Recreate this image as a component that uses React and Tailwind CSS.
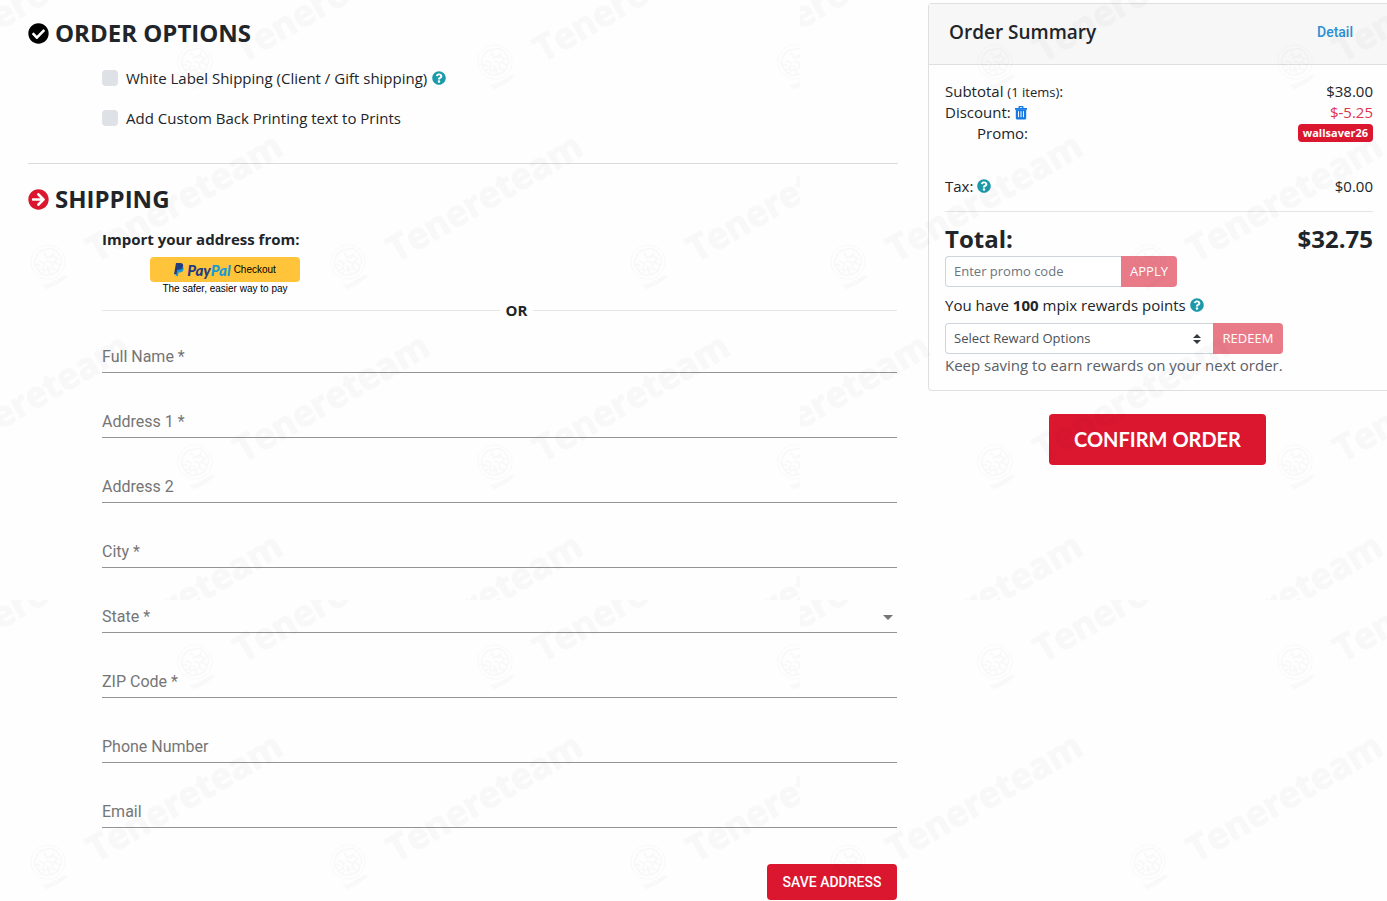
import { useState } from 'react';
import { FaArrowCircleRight, FaCheckCircle, FaQuestionCircle } from 'react-icons/fa';

const addressFields = [
  { id: 'fullName', label: 'Full Name *', type: 'text' },
  { id: 'address1', label: 'Address 1 *', type: 'text' },
  { id: 'address2', label: 'Address 2', type: 'text' },
  { id: 'city', label: 'City *', type: 'text' },
  { id: 'state', label: 'State *', type: 'select' },
  { id: 'zip', label: 'ZIP Code *', type: 'text' },
  { id: 'phone', label: 'Phone Number', type: 'tel' },
  { id: 'email', label: 'Email', type: 'email' },
];

// Stamp positions inside one 800x600 watermark tile
const stamps = [
  [-103, 65], [197, 65], [497, 65], [797, 65],
  [50, 265], [350, 265], [650, 265],
  [-103, 465], [197, 465], [497, 465], [797, 465],
  [50, 665], [350, 665], [650, 665],
];

const Watermark = () => (
  <svg className="absolute inset-0 w-full h-full pointer-events-none" aria-hidden="true">
    <defs>
      <pattern id="watermark" width="800" height="600" patternUnits="userSpaceOnUse">
        {stamps.map(([x, y]) => (
          <g key={`${x}-${y}`} transform={`translate(${x} ${y})`} opacity="0.024">
            <g fill="none" stroke="#000" strokeLinecap="round">
              <circle cx="-2" cy="-3" r="17" strokeDasharray="3 1" />
              <path
                d="M-14 -8q3 -8 9 -7q8 -4 13 3q6 7 2 13q-2 8 -9 8q-9 4 -13 -4q-6 -6 -2 -13M-11 -4l5 2l-1 6l-5 1M-6 -12l3 5l6 -3l4 4M-3 -4l6 2l-1 5l5 2M-8 8l5 -4l4 6M4 -12l-3 5M-14 -1l4 2M8 -6l-4 3l6 3M0 5l-3 -4"
                strokeWidth="1.5"
              />
              <path d="M-6 21l7 -2l7 -4l8 -5M-3 23l9 -4l7 -5l5 -4" strokeWidth="2" strokeDasharray="3 2" />
            </g>
            <text
              transform="translate(46 -2) rotate(-30)"
              fontFamily="Open Sans, sans-serif"
              fontWeight="700"
              fontSize="36"
              stroke="#000"
              strokeWidth="1"
            >
              Tenereteam
            </text>
          </g>
        ))}
      </pattern>
    </defs>
    <rect width="100%" height="100%" fill="url(#watermark)" />
  </svg>
);

const HelpButton = ({ label }) => (
  <button type="button" aria-label={label} className="text-[#1d9aaa]">
    <FaQuestionCircle size={14} />
  </button>
);

const SectionTitle = ({ icon, children }) => (
  <h2 className="flex items-center gap-1.5 text-2xl leading-9 font-bold text-[#212529]">
    {icon}
    {children}
  </h2>
);

const CheckOption = ({ id, label, help }) => (
  <div className="flex items-center h-6">
    <input
      id={id}
      type="checkbox"
      className="appearance-none size-4 rounded bg-[#dee2e6] checked:bg-[#db162f] mr-2"
    />
    <label htmlFor={id} className="mr-[5px]">{label}</label>
    {help && <HelpButton label={help} />}
  </div>
);

const Field = ({ id, label, type }) => {
  const [value, setValue] = useState('');
  const control = '[grid-area:1/1] w-full h-8 bg-transparent appearance-none outline-none border-b border-[#949494] text-[#212529]';

  return (
    <div className="grid items-center font-['Roboto',sans-serif] text-base">
      {type === 'select' ? (
        <select id={id} className={control} value={value} onChange={(e) => setValue(e.target.value)}>
          <option value=""></option>
          <option>California</option>
          <option>Kansas</option>
          <option>New York</option>
        </select>
      ) : (
        <input id={id} type={type} className={control} value={value} onChange={(e) => setValue(e.target.value)} />
      )}
      {!value && (
        <label htmlFor={id} className="[grid-area:1/1] justify-self-start text-[#757575] pointer-events-none">
          {label}
        </label>
      )}
      {type === 'select' && (
        <svg className="[grid-area:1/1] justify-self-end mr-1 pointer-events-none" width="10" height="5" viewBox="0 0 10 5">
          <path d="M0 0h10l-5 5z" fill="#757575" />
        </svg>
      )}
    </div>
  );
};

const PayPalButton = () => (
  <div className="w-[150px] ml-12 mt-1.5 font-['Liberation_Sans',Arial,sans-serif] text-black text-center">
    <button type="button" className="flex w-full h-[25px] items-center justify-center gap-[3px] rounded bg-[#ffc439]">
      <svg width="10" height="13" viewBox="0 0 10 13">
        <path d="M3.5 3.2h4.3c1.6 .5 2.2 1.7 1.7 3.4c-.5 2.2-1.9 3-4 3h-1l-.6 3.4H1.6z" fill="#179bd7" />
        <path d="M2 0h4.200c2.300 0 3.300 1.200 2.900 3.200c-.5 2.400-2 3.500-4.300 3.500H3.300l-.8 4.500H0z" fill="#253b80" />
      </svg>
      <span className="font-['Lato',sans-serif] text-[15px] leading-4 font-black italic text-[#253b80]">
        Pay<span className="text-[#179bd7]">Pal</span>
      </span>
      <span className="text-[10px]">Checkout</span>
    </button>
    <p className="text-[10px] leading-[14px]">The safer, easier way to pay</p>
  </div>
);

const OrderSummary = () => (
  <aside className="pt-[3px]">
    <div className="border border-r-0 border-[#dfdfdf] rounded-l">
      <div className="flex items-center justify-between h-[61px] pl-5 pr-[34px] pb-1 bg-[#f7f7f7] border-b border-[#dfdfdf]">
        <h3 className="text-[19px] font-semibold">Order Summary</h3>
        <a href="#detail" className="font-['Roboto',sans-serif] text-sm font-medium text-[#2a8fd5]">Detail</a>
      </div>
      <div className="pl-4 pr-3.5 pt-4 pb-3.5">
        <div className="flex items-center justify-between h-[21px]">
          <span>Subtotal <small className="text-[13px]">(1 items)</small>:</span>
          <span>$38.00</span>
        </div>
        <div className="flex items-center justify-between h-[21px]">
          <span className="flex items-center gap-1">
            Discount:
            <button type="button" aria-label="Remove discount" className="text-[#1579e6]">
              <svg width="12" height="14" viewBox="0 0 12 14">
                <path
                  d="M3.500 2V.8q0 -.8 .8 -.8h3.400q.8 0 .8 .8V2H12v1.800H0V2zM4.800 2h2.400V1.200H4.800z"
                  fill="currentColor"
                  fillRule="evenodd"
                />
                <path d="M.8 3.500h10.400v8.500q0 1.500 -1.500 1.500H2.300q-1.500 0 -1.500 -1.500z" fill="currentColor" />
                <path d="M3.500 5.200v6M6 5.200v6M8.500 5.200v6" stroke="#fff" strokeWidth="1" />
              </svg>
            </button>
          </span>
          <span className="text-[#dc3550]">$-5.25</span>
        </div>
        <div className="flex items-center justify-between h-5">
          <span className="pl-8">Promo:</span>
          <span className="rounded bg-[#db162f] px-[5px] text-[11px] leading-[18px] font-bold text-white">wallsaver26</span>
        </div>
        <div className="flex items-center justify-between h-6 mt-[31px]">
          <span className="flex items-center gap-1">
            Tax:
            <HelpButton label="About tax" />
          </span>
          <span>$0.00</span>
        </div>
        <hr className="mt-[13px] border-[#e5e5e5]" />
        <div className="flex items-center justify-between h-[35px] mt-[9px] text-2xl font-bold">
          <span>Total:</span>
          <span>$32.75</span>
        </div>
        <form className="flex h-[31px] text-[13px]" onSubmit={(e) => e.preventDefault()}>
          <input
            type="text"
            aria-label="Enter promo code"
            placeholder="Enter promo code"
            className="w-44 px-2 rounded-l border border-r-0 border-[#ced4da] bg-white placeholder:text-[#6c757d] outline-none"
          />
          <button type="submit" className="w-14 rounded-r bg-[#e97b89] font-medium text-white">APPLY</button>
        </form>
        <div className="flex items-center gap-1 h-9">
          <p>You have <b>100</b> mpix rewards points</p>
          <HelpButton label="About rewards points" />
        </div>
        <form className="flex h-[31px] text-[13px]" onSubmit={(e) => e.preventDefault()}>
          <div className="grid items-center w-[268px]">
            <select
              aria-label="Select Reward Options"
              className="[grid-area:1/1] h-full px-2 appearance-none rounded-l border border-r-0 border-[#ced4da] bg-white text-[#495057] outline-none"
            >
              <option>Select Reward Options</option>
            </select>
            <svg className="[grid-area:1/1] justify-self-end mr-3 pointer-events-none" width="8" height="10" viewBox="0 0 8 10">
              <path d="M4 0l4 4H0zM4 10l4-4H0z" fill="#343a40" />
            </svg>
          </div>
          <button type="submit" className="w-[70px] rounded-r bg-[#e97b89] font-medium text-white">REDEEM</button>
        </form>
        <p className="leading-[22px] text-[#5a6067]">Keep saving to earn rewards on your next order.</p>
      </div>
    </div>
    <div className="flex justify-center mt-[23px]">
      <button type="button" className="w-[217px] h-[51px] pb-0.5 rounded bg-[#db162f] font-['Lato',sans-serif] text-xl font-bold text-white">
        CONFIRM ORDER
      </button>
    </div>
  </aside>
);

function App() {
  return (
    <div className="relative min-h-screen overflow-hidden bg-[#fefefe] font-['Open_Sans',sans-serif] text-[15px] text-[#212529]">
      <div className="grid grid-cols-[870fr_459fr] gap-[30px] pl-7">
        <main className="pt-[15px]">
          <section>
            <SectionTitle icon={<FaCheckCircle size={21} className="text-black" />}>ORDER OPTIONS</SectionTitle>
            <div className="flex flex-col gap-4 pl-[74px] mt-[15px]">
              <CheckOption
                id="whiteLabel"
                label="White Label Shipping (Client / Gift shipping)"
                help="About white label shipping"
              />
              <CheckOption id="backPrint" label="Add Custom Back Printing text to Prints" />
            </div>
          </section>

          <hr className="mt-[33px] border-[#d9dbdd]" />

          <section className="mt-[17px]">
            <SectionTitle icon={<FaArrowCircleRight size={21} className="text-[#db162f]" />}>SHIPPING</SectionTitle>
            <div className="pl-[74px] pr-px mt-2.5">
              <p className="leading-6 font-bold">Import your address from:</p>
              <PayPalButton />
              <div className="flex items-center gap-1.5 mt-0.5 font-bold leading-6">
                <hr className="w-1/2 border-[#e5e5e5]" />
                OR
                <hr className="flex-1 border-[#e5e5e5]" />
              </div>
              <form onSubmit={(e) => e.preventDefault()}>
                <div className="flex flex-col gap-[33px] mt-[19px]">
                  {addressFields.map((field) => (
                    <Field key={field.id} {...field} />
                  ))}
                </div>
                <div className="flex justify-end mt-9">
                  <button
                    type="submit"
                    className="w-[130px] h-9 rounded bg-[#db162f] font-['Roboto',sans-serif] text-sm font-medium text-white"
                  >
                    SAVE ADDRESS
                  </button>
                </div>
              </form>
            </div>
          </section>
        </main>
        <OrderSummary />
      </div>
      <Watermark />
    </div>
  );
}

export default App;
